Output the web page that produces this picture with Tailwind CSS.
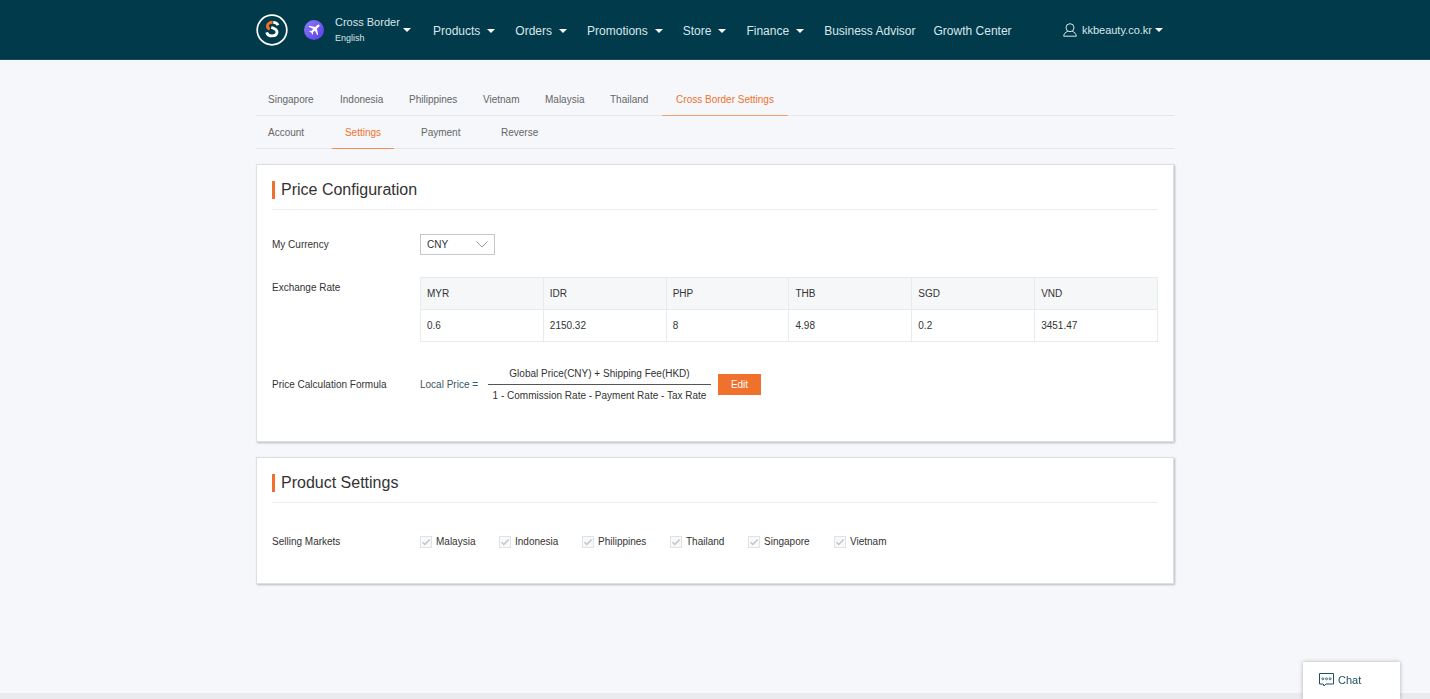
<!DOCTYPE html>
<html lang="en">
<head>
<meta charset="utf-8">
<meta name="viewport" content="width=device-width, initial-scale=1">
<title>Seller Center - Settings</title>
<script src="https://cdn.jsdelivr.net/npm/@tailwindcss/browser@4"></script>
</head>
<body class="flex min-h-screen flex-col bg-[#f5f7fb] font-['Liberation_Sans',Arial,sans-serif] text-[10px] leading-4 text-[#333]">
<header class="border-b border-[#1c4d5c] bg-[#003a4b] text-[#d9e6ea]">
  <div class="mx-auto flex h-[59px] w-full max-w-[918px] items-center">
    <a href="#" aria-label="Home" class="shrink-0">
      <svg class="mt-px size-8" viewBox="0 0 32 32" fill="none">
        <circle cx="16" cy="16" r="14.8" stroke="#fff" stroke-width="1.700"/>
        <path d="M17.200 8.300C20 8.300 21.300 9.400 22 11.300" stroke="#fff" stroke-width="2.800"/>
        <path d="M15.300 13.300c3.700 1.100 5.700 2.200 5.700 4.700 0 2.400-2 3.900-5 3.900s-4.700-1.300-5.300-3.600" stroke="#fff" stroke-width="2.900"/>
        <path d="M16.600 8.300c-3.200 0-5.200 1.500-5.200 3.700 0 1.500.8 2.500 2.300 3.100" stroke="#f37021" stroke-width="2.900"/>
      </svg>
    </a>
    <button type="button" class="ml-4 flex items-center pt-px text-left">
      <svg class="size-5" viewBox="0 0 20 20">
        <defs><linearGradient id="badge" x1="0" y1="0" x2="1" y2="1"><stop stop-color="#8f7cf4"/><stop offset="1" stop-color="#563de8"/></linearGradient></defs>
        <circle cx="10" cy="10" r="10" fill="url(#badge)"/>
        <path d="M15.300 4.900c-.6-.6-1.500-.3-2.200.3l-1.800 1.700-6-1.200-.8.8 4.800 2.500-1.900 2-1.700-.3-.6.6 2.100 1.300 1.300 2.100.6-.6-.2-1.700 2-1.800 2.300 4.700.8-.8-1-5.900 1.900-1.800c.7-.7 1-1.400.4-1.900z" fill="#fff"/>
      </svg>
      <span class="ml-[11px] w-[68px]">
        <span class="block text-[11px] leading-4">Cross Border</span>
        <span class="block text-[9px] leading-4">English</span>
      </span>
      <svg class="h-1 w-2" viewBox="0 0 8 4"><path d="M0 0h8L4 4z" fill="#fff"/></svg>
    </button>
    <nav class="ml-[22px] flex items-center gap-5 pt-[2px] text-xs" aria-label="Main">
      <button type="button" class="flex items-center gap-[7px]">Products<svg class="h-1 w-2" viewBox="0 0 8 4"><path d="M0 0h8L4 4z" fill="#fff"/></svg></button>
      <button type="button" class="flex items-center gap-[7px]">Orders<svg class="h-1 w-2" viewBox="0 0 8 4"><path d="M0 0h8L4 4z" fill="#fff"/></svg></button>
      <button type="button" class="flex items-center gap-[7px]">Promotions<svg class="h-1 w-2" viewBox="0 0 8 4"><path d="M0 0h8L4 4z" fill="#fff"/></svg></button>
      <button type="button" class="flex items-center gap-[7px]">Store<svg class="h-1 w-2" viewBox="0 0 8 4"><path d="M0 0h8L4 4z" fill="#fff"/></svg></button>
      <button type="button" class="flex items-center gap-[7px]">Finance<svg class="h-1 w-2" viewBox="0 0 8 4"><path d="M0 0h8L4 4z" fill="#fff"/></svg></button>
      <span class="flex gap-[18px] whitespace-nowrap"><a href="#">Business Advisor</a><a href="#">Growth Center</a></span>
    </nav>
    <button type="button" class="mr-[11px] ml-auto flex items-center text-[11px]">
      <svg class="mr-[5px] h-[14px] w-[14px]" viewBox="0 0 14 14" fill="none" stroke="#d9e6ea"><circle cx="7" cy="4.700" r="4"/><path d="M4.800 8.300C2.300 9.200 1 10.600.7 13.200h12.600c-.3-2.600-1.600-4-4.100-4.900"/></svg>
      kkbeauty.co.kr
      <svg class="ml-[3px] h-1 w-2" viewBox="0 0 8 4"><path d="M0 0h8L4 4z" fill="#fff"/></svg>
    </button>
  </div>
</header>

<main class="mx-auto w-full max-w-[918px] grow pt-[23px]">
  <nav class="flex border-b border-[#e3e6eb] text-[#666]" aria-label="Countries">
    <a href="#" class="h-8 w-[72px] pt-[9px] pl-3">Singapore</a>
    <a href="#" class="h-8 w-[69px] pt-[9px] pl-3">Indonesia</a>
    <a href="#" class="h-8 w-[74px] pt-[9px] pl-3">Philippines</a>
    <a href="#" class="h-8 w-[62px] pt-[9px] pl-3">Vietnam</a>
    <a href="#" class="h-8 w-[65px] pt-[9px] pl-3">Malaysia</a>
    <a href="#" class="h-8 w-[64px] pt-[9px] pl-3">Thailand</a>
    <a href="#" aria-current="page" class="-mb-px h-[33px] w-[126px] border-b border-[#f0a36f] pt-[9px] text-center text-[#f0712c]">Cross Border Settings</a>
  </nav>
  <nav class="flex gap-[15px] border-b border-[#e3e6eb] text-[#666]" aria-label="Sections">
    <a href="#" class="h-8 w-[61px] pt-[9px] pl-3">Account</a>
    <a href="#" aria-current="page" class="-mb-px h-[33px] w-[62px] border-b border-[#f08f57] pt-[9px] text-center text-[#f0712c]">Settings</a>
    <a href="#" class="h-8 w-[65px] pt-[9px] pl-3">Payment</a>
    <a href="#" class="h-8 w-[62px] pt-[9px] pl-3">Reverse</a>
  </nav>

  <section class="mt-[15px] border border-[#dcdfe3] bg-white px-[15px] pb-[35px] shadow-[1px_1px_2px_rgba(0,0,0,0.25)]">
    <div class="flex h-[45px] items-center border-b border-[#ebedf0] pt-[6px]">
      <h2 class="border-l-3 border-[#f0712c] pl-[6px] text-base leading-[18px]">Price Configuration</h2>
    </div>
    <div class="mt-6 flex items-center">
      <label for="currency" class="w-[148px] shrink-0">My Currency</label>
      <span class="relative">
        <select id="currency" class="h-[21px] w-[75px] appearance-none border border-[#c4c8cc] bg-white pl-[6px]"><option>CNY</option></select>
        <svg class="pointer-events-none absolute top-[7px] right-[7px] h-[7px] w-3" viewBox="0 0 12 7" fill="none" stroke="#999"><path d="M.5.500 6 6 11.500.500"/></svg>
      </span>
    </div>
    <div class="mt-[22px] flex items-start">
      <span id="rates" class="w-[148px] shrink-0 pt-[3px]">Exchange Rate</span>
      <table aria-labelledby="rates" class="w-full table-fixed border-collapse text-left [&_td]:h-8 [&_td]:border [&_td]:border-[#e8ebee] [&_td]:pl-[6px] [&_th]:h-8 [&_th]:border [&_th]:border-[#e8ebee] [&_th]:pl-[6px] [&_th]:font-normal">
        <thead class="bg-[#f5f7f9]"><tr><th>MYR</th><th>IDR</th><th>PHP</th><th>THB</th><th>SGD</th><th>VND</th></tr></thead>
        <tbody><tr><td>0.6</td><td>2150.32</td><td>8</td><td>4.98</td><td>0.2</td><td>3451.47</td></tr></tbody>
      </table>
    </div>
    <div class="mt-[21px] flex items-center">
      <span class="w-[148px] shrink-0">Price Calculation Formula</span>
      <span class="w-[68px] text-[#3b5563]">Local Price =</span>
      <span class="flex w-[223px] flex-col text-center whitespace-nowrap">
        <span class="border-b border-[#555] pt-[3px] pb-[2px]">Global Price(CNY) + Shipping Fee(HKD)</span>
        <span class="pt-[3px] pb-[2px]">1 - Commission Rate - Payment Rate - Tax Rate</span>
      </span>
      <button type="button" class="ml-[7px] h-[21px] w-[43px] bg-[#f0712c] text-white">Edit</button>
    </div>
  </section>

  <section class="mt-[15px] border border-[#dcdfe3] bg-white px-[15px] pb-[33px] shadow-[1px_1px_2px_rgba(0,0,0,0.25)]">
    <div class="flex h-[45px] items-center border-b border-[#ebedf0] pt-[6px]">
      <h2 class="border-l-3 border-[#f0712c] pl-[6px] text-base leading-[18px]">Product Settings</h2>
    </div>
    <div class="mt-[31px] flex items-center" role="group" aria-labelledby="markets">
      <span id="markets" class="w-[148px] shrink-0">Selling Markets</span>
      <label class="flex w-[79px] items-center gap-1"><span class="relative size-3"><input type="checkbox" checked disabled class="block size-3 appearance-none border border-[#dfe3e6] bg-[#f7f9fa]"><svg class="absolute inset-0 size-3" viewBox="0 0 12 12" fill="none" stroke="#bfc4c8" stroke-width="1.300"><path d="m2.500 6.200 2.300 2.300 4.800-5"/></svg></span>Malaysia</label>
      <label class="flex w-[83px] items-center gap-1"><span class="relative size-3"><input type="checkbox" checked disabled class="block size-3 appearance-none border border-[#dfe3e6] bg-[#f7f9fa]"><svg class="absolute inset-0 size-3" viewBox="0 0 12 12" fill="none" stroke="#bfc4c8" stroke-width="1.300"><path d="m2.500 6.200 2.300 2.300 4.800-5"/></svg></span>Indonesia</label>
      <label class="flex w-[88px] items-center gap-1"><span class="relative size-3"><input type="checkbox" checked disabled class="block size-3 appearance-none border border-[#dfe3e6] bg-[#f7f9fa]"><svg class="absolute inset-0 size-3" viewBox="0 0 12 12" fill="none" stroke="#bfc4c8" stroke-width="1.300"><path d="m2.500 6.200 2.300 2.300 4.800-5"/></svg></span>Philippines</label>
      <label class="flex w-[78px] items-center gap-1"><span class="relative size-3"><input type="checkbox" checked disabled class="block size-3 appearance-none border border-[#dfe3e6] bg-[#f7f9fa]"><svg class="absolute inset-0 size-3" viewBox="0 0 12 12" fill="none" stroke="#bfc4c8" stroke-width="1.300"><path d="m2.500 6.200 2.300 2.300 4.800-5"/></svg></span>Thailand</label>
      <label class="flex w-[86px] items-center gap-1"><span class="relative size-3"><input type="checkbox" checked disabled class="block size-3 appearance-none border border-[#dfe3e6] bg-[#f7f9fa]"><svg class="absolute inset-0 size-3" viewBox="0 0 12 12" fill="none" stroke="#bfc4c8" stroke-width="1.300"><path d="m2.500 6.200 2.300 2.300 4.800-5"/></svg></span>Singapore</label>
      <label class="flex items-center gap-1"><span class="relative size-3"><input type="checkbox" checked disabled class="block size-3 appearance-none border border-[#dfe3e6] bg-[#f7f9fa]"><svg class="absolute inset-0 size-3" viewBox="0 0 12 12" fill="none" stroke="#bfc4c8" stroke-width="1.300"><path d="m2.500 6.200 2.300 2.300 4.800-5"/></svg></span>Vietnam</label>
    </div>
  </section>
</main>
<footer class="h-[6px] bg-[#e9ebee]"></footer>

<button type="button" class="fixed right-[30px] bottom-0 flex h-[37px] w-[97px] items-center gap-1 bg-white pb-[2px] pl-4 text-[11px] text-[#1d5163] shadow-[0_0_4px_rgba(0,0,0,0.3)]">
  <svg class="h-[14px] w-[15px]" viewBox="0 0 15 14" fill="none" stroke="#1d5163"><path d="M.5.500h14v10.500H7l-2 2-.8-2H.5z"/><circle cx="3.900" cy="5.800" r="1" stroke-width=".8"/><circle cx="7.500" cy="5.800" r="1" stroke-width=".8"/><circle cx="11.100" cy="5.800" r="1" stroke-width=".8"/></svg>
  Chat
</button>
</body>
</html>
